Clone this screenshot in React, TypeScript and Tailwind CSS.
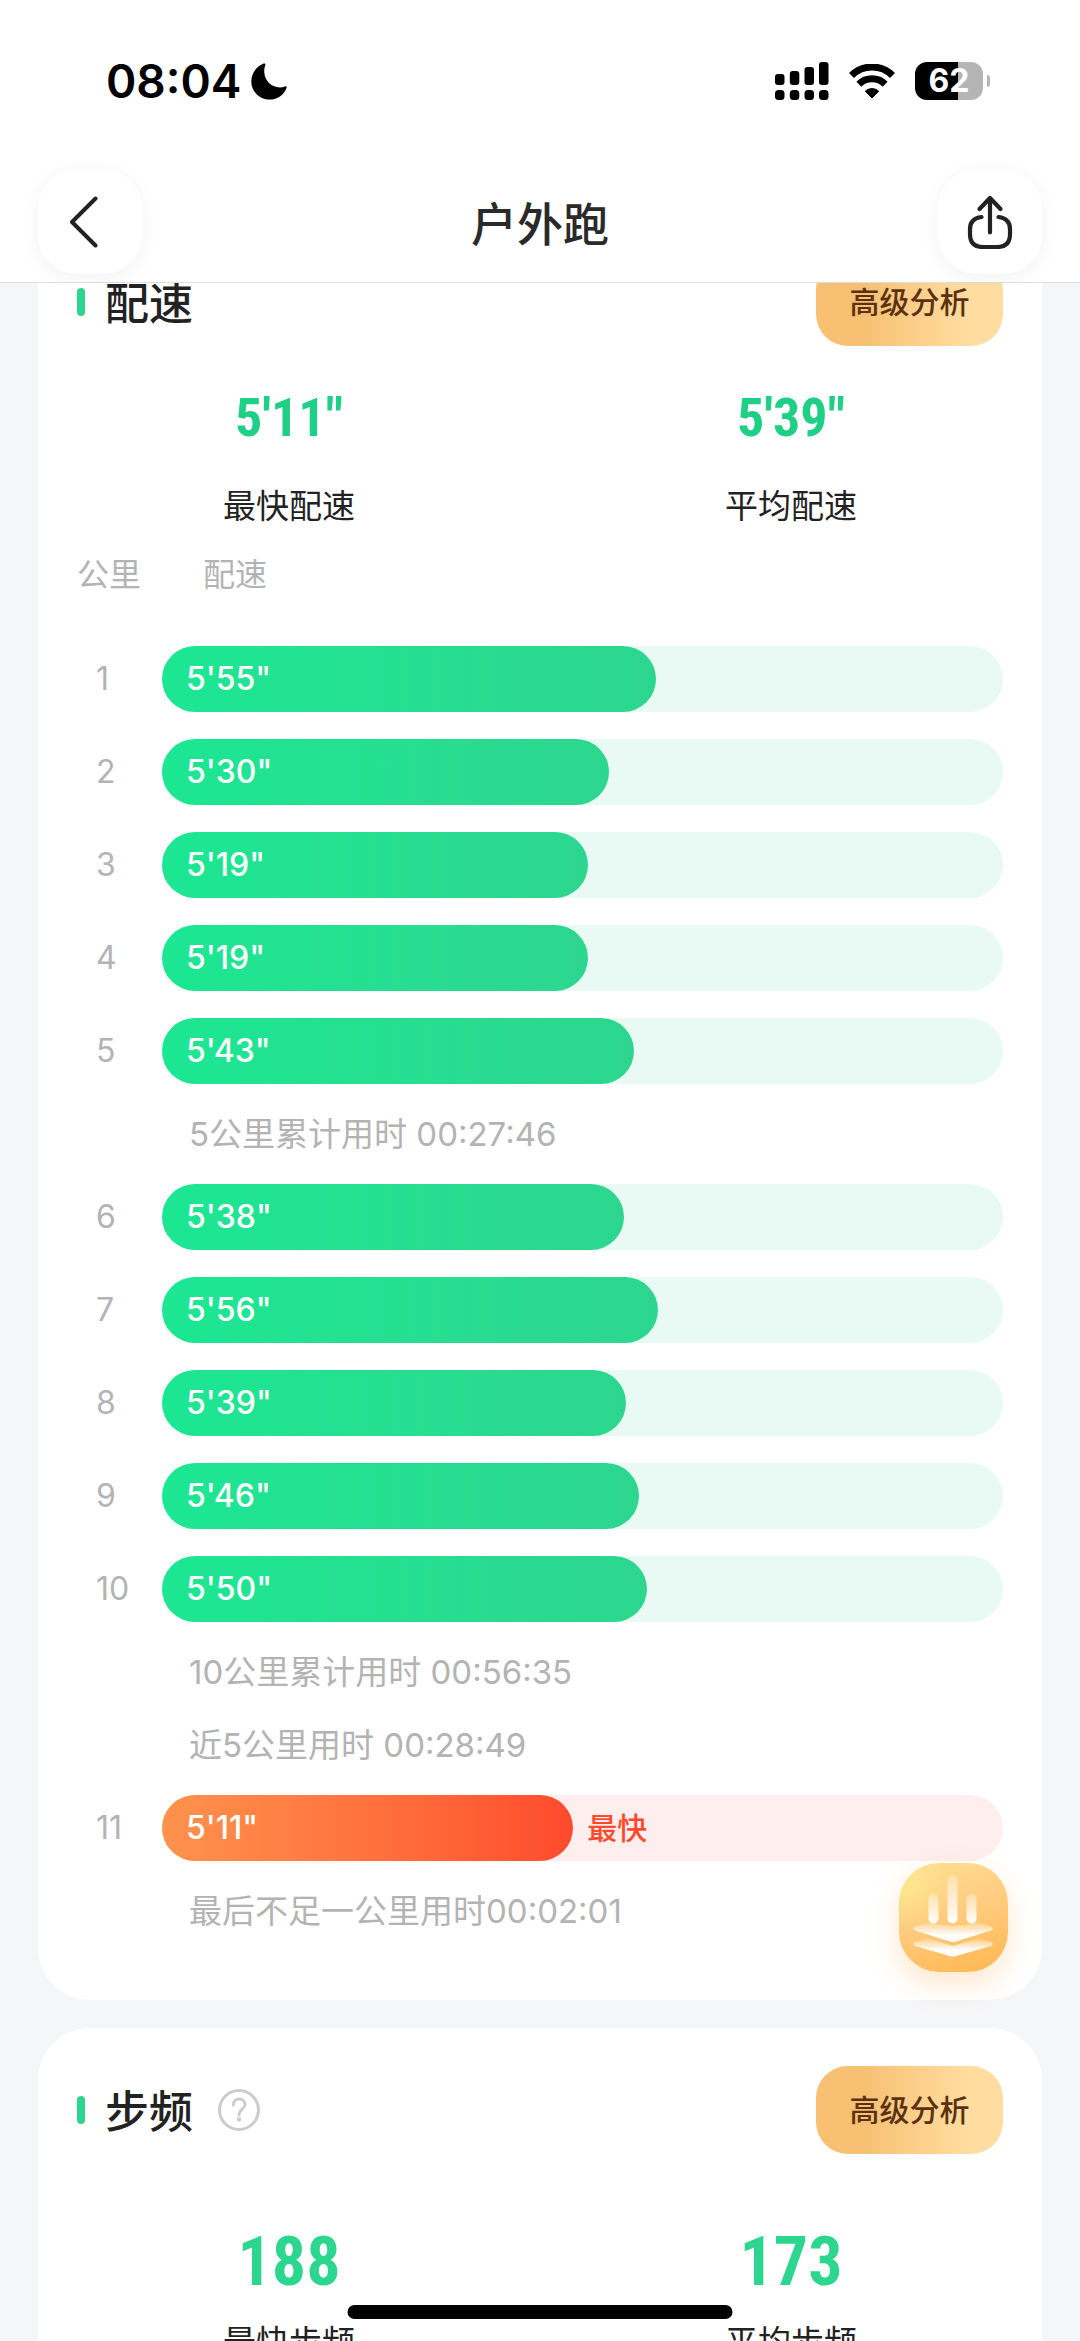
import React, { type FC, type ReactNode } from 'react';

type Split = {
  km: number;
  pace: string;
  seconds: number;
  notes?: string[];
};

const splits: Split[] = [
  { km: 1, pace: '5\'55"', seconds: 355 },
  { km: 2, pace: '5\'30"', seconds: 330 },
  { km: 3, pace: '5\'19"', seconds: 319 },
  { km: 4, pace: '5\'19"', seconds: 319 },
  { km: 5, pace: '5\'43"', seconds: 343, notes: ['5公里累计用时 00:27:46'] },
  { km: 6, pace: '5\'38"', seconds: 338 },
  { km: 7, pace: '5\'56"', seconds: 356 },
  { km: 8, pace: '5\'39"', seconds: 339 },
  { km: 9, pace: '5\'46"', seconds: 346 },
  {
    km: 10,
    pace: '5\'50"',
    seconds: 350,
    notes: ['10公里累计用时 00:56:35', '近5公里用时 00:28:49'],
  },
  { km: 11, pace: '5\'11"', seconds: 311, notes: ['最后不足一公里用时00:02:01'] },
];

const fastest = Math.min(...splits.map((split) => split.seconds));

// The fastest split takes just under half of the track, slower ones grow from there
const barWidth = (seconds: number) => `${48.9 + (seconds - fastest) * 0.2245}%`;

const StatusBar: FC = () => (
  <div className="flex h-[162px] items-center justify-between pr-[90px] pl-[106px] text-black">
    <div className="flex items-center gap-[10px]">
      <span className="text-[46px] leading-none font-semibold">08:04</span>
      <svg className="h-[37px] w-[36px]" viewBox="0 0 36 37" fill="currentColor" aria-hidden="true">
        <path d="M12.6.6C13.6.1 14.7.7 14.3 1.8 13.4 4.4 13.1 7 13.3 9.6 14 18.4 20.6 24.4 29 24.4 30.7 24.4 32.5 24.1 34 23.5 35.1 23 36 23.8 35.5 24.9 32.9 31.9 26.4 36.6 18.7 36.6 8.5 36.6.3 28.6.3 18.5.3 10.5 5.3 3.5 12.6.6Z" />
      </svg>
    </div>
    <div className="flex items-center gap-5">
      <svg className="h-[38px] w-[54px]" viewBox="0 0 54 38" fill="currentColor" aria-hidden="true">
        <rect x="0" y="12" width="9.5" height="11" rx="3" />
        <rect x="14.8" y="9" width="9.5" height="14" rx="3" />
        <rect x="29.5" y="5" width="9.5" height="18" rx="3" />
        <rect x="44" y="0" width="9.5" height="23" rx="3" />
        <rect x="0" y="28" width="9.5" height="10" rx="3.5" />
        <rect x="14.8" y="28" width="9.5" height="10" rx="3.5" />
        <rect x="29.5" y="28" width="9.5" height="10" rx="3.5" />
        <rect x="44" y="28" width="9.5" height="10" rx="3.5" />
      </svg>
      <svg className="h-[35px] w-[46px]" viewBox="0 0 46 35" fill="none" aria-hidden="true">
        <path d="M2.5 11.5a29 29 0 0 1 41 0" stroke="currentColor" strokeWidth="7" />
        <path d="M9.9 20.2a18.500 18.500 0 0 1 26.200 0" stroke="currentColor" strokeWidth="7" />
        <path
          d="M16.3 27.3c3.8-3.600 9.600-3.600 13.400 0L23 34z"
          fill="currentColor"
          stroke="currentColor"
          strokeLinejoin="round"
        />
      </svg>
      <div className="flex items-center gap-1">
        <span className="flex h-[38px] w-[68px] items-center justify-center rounded-[12px] bg-linear-to-r from-black from-63% to-[#b5b5b5] to-63% text-[32px] leading-none font-bold text-white">
          62
        </span>
        <span className="h-3 w-[3px] rounded-r-full bg-[#b5b5b5]" />
      </div>
    </div>
  </div>
);

const NavButton: FC<{ label: string; children: ReactNode }> = ({ label, children }) => (
  <button
    type="button"
    aria-label={label}
    className="flex size-[104px] items-center justify-center rounded-[38px] bg-white text-[#222] shadow-[0_4px_20px_rgba(0,0,0,0.05)]"
  >
    {children}
  </button>
);

const NavBar: FC = () => (
  <nav className="flex h-[120px] items-center justify-between px-[38px]">
    <NavButton label="返回">
      <svg className="mr-3 h-[52px] w-[30px]" viewBox="0 0 30 52" fill="none" aria-hidden="true">
        <path
          d="M26.5 2.5 3 26l23.5 23.5"
          stroke="currentColor"
          strokeWidth="4"
          strokeLinecap="round"
          strokeLinejoin="round"
        />
      </svg>
    </NavButton>
    <h1 className="pt-1 text-[46px] leading-[60px] font-medium text-[#2a2a2a]">户外跑</h1>
    <NavButton label="分享">
      <svg
        className="h-[54px] w-[46px]"
        viewBox="0 0 46 54"
        fill="none"
        stroke="currentColor"
        strokeWidth="4.2"
        strokeLinecap="round"
        strokeLinejoin="round"
        aria-hidden="true"
      >
        <path d="M23 37.5V3.5M12.5 14 23 3 33.5 14" />
        <path d="M14.5 22C7 23 3 27 3 34v5c0 8.5 4.5 13 13 13h14c8.5 0 13-4.5 13-13v-5c0-7-4-11-11.5-12" />
      </svg>
    </NavButton>
  </nav>
);

const SectionHeader: FC<{ title: string; withHelp?: boolean }> = ({ title, withHelp }) => (
  <div className="flex items-center px-[39px]">
    <span className="h-7 w-2 rounded-full bg-[#2dd68f]" />
    <h2 className="ml-5 pt-1 text-[44px] leading-[60px] font-medium text-[#222]">{title}</h2>
    {withHelp && (
      <button type="button" aria-label="步频说明" className="ml-[25px] text-[#ccc]">
        <svg
          className="size-[42px]"
          viewBox="0 0 42 42"
          fill="none"
          stroke="currentColor"
          strokeWidth="3"
          strokeLinecap="round"
          aria-hidden="true"
        >
          <circle cx="21" cy="21" r="19.5" />
          <path d="M15.3 16c0-3.6 2.5-6 5.9-6s5.8 2.3 5.8 5.5c0 4.6-6 5-6 10.5" />
          <circle cx="21" cy="30.5" r="2.2" fill="currentColor" stroke="none" />
        </svg>
      </button>
    )}
    <button
      type="button"
      className="ml-auto h-[88px] w-[187px] rounded-[32px] bg-linear-to-r from-[#f7c073] from-25% to-[#ffdc9f] to-80% text-[30px] font-medium text-[#5a3212]"
    >
      高级分析
    </button>
  </div>
);

const Stat: FC<{ value: string; label: string; large?: boolean }> = ({ value, label, large }) => (
  <div className="flex flex-col items-center">
    <dd
      className={
        large
          ? 'mt-[72px] font-[Roboto_Condensed,Liberation_Sans_Narrow,Roboto,sans-serif] text-[68px] leading-[72px] font-bold text-[#2dd68f]'
          : 'mt-[44px] font-[Roboto_Condensed,Liberation_Sans_Narrow,Roboto,sans-serif] text-[54px] leading-[56px] font-bold text-[#1fcf85]'
      }
    >
      {value}
    </dd>
    <dt
      className={
        large
          ? 'order-last mt-[21px] text-[33px] leading-[46px] text-[#222]'
          : 'order-last mt-[37px] text-[33px] leading-[46px] text-[#222]'
      }
    >
      {label}
    </dt>
  </div>
);

const SplitRows: FC<{ split: Split }> = ({ split }) => {
  const isFastest = split.seconds === fastest;

  return (
    <>
      <tr className="text-[32px]">
        <td className="pb-[27px] pl-[19px] text-[#b3b3b3]">{split.km}</td>
        <td className="pb-[27px]">
          <div
            className={
              isFastest
                ? 'flex h-[66px] items-center rounded-full bg-[#ffeeee]'
                : 'flex h-[66px] items-center rounded-full bg-[#e8faf3]'
            }
          >
            <div
              className={
                isFastest
                  ? 'flex h-full items-center rounded-full bg-linear-to-r from-[#ff924d] to-[#ff4a2d] pl-6 font-medium text-white'
                  : 'flex h-full items-center rounded-full bg-linear-to-r from-[#1be793] to-[#2dd68f] pl-6 font-medium text-white'
              }
              style={{ width: barWidth(split.seconds) }}
            >
              {split.pace}
            </div>
            {isFastest && (
              <span className="ml-[14px] text-[30px] font-medium text-[#ff4a2d]">最快</span>
            )}
          </div>
        </td>
      </tr>
      {split.notes?.map((note) => (
        <tr key={note}>
          <td />
          <td className="pb-[27px] pl-[27px] leading-[46px] text-[#b3b3b3]">{note}</td>
        </tr>
      ))}
    </>
  );
};

const PaceTable: FC = () => (
  <div className="px-[39px]">
    <table className="mt-[23px] w-full table-fixed text-left text-[33px]">
      <colgroup>
        <col className="w-[85px]" />
        <col />
      </colgroup>
      <thead>
        <tr className="text-[32px] leading-[46px] text-[#b3b3b3]">
          <th className="pb-12 font-normal whitespace-nowrap">公里</th>
          <th className="pb-12 pl-[41px] font-normal">配速</th>
        </tr>
      </thead>
      <tbody>
        {splits.map((split) => (
          <SplitRows key={split.km} split={split} />
        ))}
      </tbody>
    </table>
  </div>
);

const LayersButton: FC = () => (
  <button
    type="button"
    aria-label="数据分析"
    className="absolute right-[72px] bottom-[369px] size-[109px] rounded-[40px] shadow-[0_12px_28px_rgba(255,170,70,0.28)]"
  >
    <svg className="size-full" viewBox="0 0 109 109" aria-hidden="true">
      <defs>
        <linearGradient id="fab" x1="0.3" y1="0" x2="0.6" y2="1">
          <stop offset="0" stopColor="#ffdc90" />
          <stop offset="0.5" stopColor="#ffcb7e" />
          <stop offset="1" stopColor="#ffba57" />
        </linearGradient>
        <radialGradient id="fabGlow" cx="0.08" cy="0.22" r="0.4">
          <stop offset="0" stopColor="#ffee90" stopOpacity="0.6" />
          <stop offset="1" stopColor="#ffee90" stopOpacity="0" />
        </radialGradient>
        <linearGradient id="fabBar" x1="0" y1="0" x2="0" y2="1">
          <stop offset="0" stopColor="#fff" stopOpacity="0.3" />
          <stop offset="1" stopColor="#fff" />
        </linearGradient>
        <linearGradient id="fabLayer" x1="0" y1="0" x2="0" y2="1">
          <stop offset="0" stopColor="#fff" stopOpacity="0.15" />
          <stop offset="0.65" stopColor="#fff" />
        </linearGradient>
      </defs>
      <rect width="109" height="109" rx="40" fill="url(#fab)" />
      <rect width="109" height="109" rx="40" fill="url(#fabGlow)" />
      <rect x="29.5" y="31" width="10" height="29.5" rx="5" fill="url(#fabBar)" />
      <rect x="48.5" y="12.5" width="10" height="48" rx="5" fill="url(#fabBar)" />
      <rect x="67.5" y="31" width="10" height="29.5" rx="5" fill="url(#fabBar)" />
      <path
        d="M16 63.5 31 59.5Q54 66 77.5 59.5L92 63.5Q95.5 65.5 92 67.5L57 78.5Q54 79.5 51 78.5L16 67.5Q12.5 65.5 16 63.5Z"
        fill="url(#fabLayer)"
      />
      <path
        d="M16 79 29 75.5 51 82Q54 83 57 82L79 75.5 92 79Q95.5 81 92 83L57 93Q54 94 51 93L16 83Q12.5 81 16 79Z"
        fill="url(#fabLayer)"
      />
    </svg>
  </button>
);

const App: FC = () => {
  return (
    <div className="relative flex h-screen flex-col overflow-hidden bg-[#f5f6f8] font-[Inter,Noto_Sans_CJK_SC,sans-serif]">
      <header className="shrink-0 border-b border-[#dedede] bg-white">
        <StatusBar />
        <NavBar />
      </header>
      <main className="min-h-0 flex-1 overflow-hidden px-[38px]">
        {/* Scrolled a little, so the top of the first card sits behind the header */}
        <div className="-mt-[63px] flex flex-col gap-7">
          <section className="rounded-[52px] bg-white pt-[38px] pb-[39px]">
            <SectionHeader title="配速" />
            <dl className="grid grid-cols-2">
              <Stat value={'5\'11"'} label="最快配速" />
              <Stat value={'5\'39"'} label="平均配速" />
            </dl>
            <PaceTable />
          </section>
          <section className="rounded-[52px] bg-white pt-[38px] pb-[39px]">
            <SectionHeader title="步频" withHelp />
            <dl className="grid grid-cols-2">
              <Stat value="188" label="最快步频" large />
              <Stat value="173" label="平均步频" large />
            </dl>
          </section>
        </div>
      </main>
      <LayersButton />
      <div className="absolute bottom-[22px] left-1/2 h-[14px] w-[385px] -translate-x-1/2 rounded-full bg-black" />
    </div>
  );
};

export default App;
